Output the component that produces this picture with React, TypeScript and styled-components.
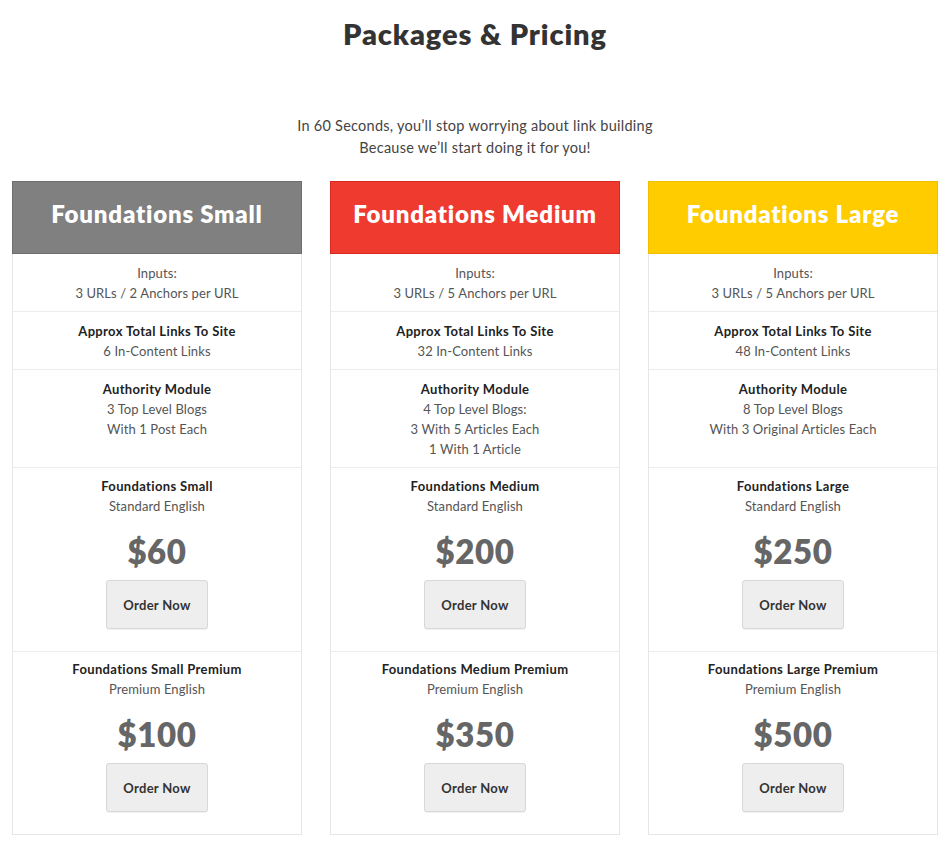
import React from "react";
import styled, { createGlobalStyle } from "styled-components";

const Global = createGlobalStyle`
  html, body { margin: 0; padding: 0; background: #fff; }
  body { font-family: Lato, "Open Sans", Arial, sans-serif; color: #444; }
`;

const Page = styled.div`
  padding: 0 12px 22px;
`;

const Title = styled.h1`
  margin: 0;
  padding-top: 14px;
  height: 40px;
  line-height: 40px;
  font-size: 29px;
  font-weight: 800;
  color: #333;
  text-align: center;
  letter-spacing: 0.9px;
`;

const Intro = styled.p`
  margin: 61px 0 0;
  font-size: 14.5px;
  line-height: 22px;
  color: #444;
  text-align: center;
  letter-spacing: 0.25px;
`;

const Grid = styled.div`
  margin-top: 22px;
  display: grid;
  grid-template-columns: repeat(3, 1fr);
  grid-template-rows: 73px auto auto auto auto auto;
  column-gap: 28px;
`;

const Card = styled.div`
  display: grid;
  grid-template-rows: subgrid;
  grid-row: span 6;
  border: 1px solid #e6e6e6;
`;

const Header = styled.div<{ $bg: string; $edge: string }>`
  background: ${(p) => p.$bg};
  border: 1px solid ${(p) => p.$edge};
  margin: -1px -1px 0;
  padding-bottom: 9px;
  display: flex;
  align-items: center;
  justify-content: center;
  color: #fff;
  font-size: 24px;
  font-weight: 800;
  letter-spacing: 0.8px;
`;

const Cell = styled.div<{ $pt?: number; $pb?: number }>`
  border-top: 1px solid #ececec;
  padding: ${(p) => p.$pt ?? 9}px 8px ${(p) => p.$pb ?? 8}px;
  text-align: center;
  font-size: 13px;
  line-height: 20px;
  color: #555;
  letter-spacing: 0.1px;
  &:nth-child(2) { border-top: none; }
`;

const Label = styled.div`
  font-weight: 700;
  color: #222;
  letter-spacing: 0.35px;
`;

const Line = styled.div``;

const Price = styled.div`
  margin-top: 16px;
  font-size: 33px;
  line-height: 38px;
  font-weight: 800;
  color: #666;
  letter-spacing: 0.6px;
`;

const OrderButton = styled.button`
  margin-top: 10px;
  width: 102px;
  height: 49px;
  border: 1px solid #d8d8d8;
  border-radius: 3px;
  background: #eeeeee;
  box-shadow: 0 1px 1px rgba(0, 0, 0, 0.06);
  font-family: inherit;
  font-size: 13px;
  font-weight: 700;
  color: #333;
  letter-spacing: 0.3px;
  cursor: pointer;
`;

type Tier = {
  name: string;
  bg: string;
  edge: string;
  inputs: string;
  links: string;
  authority: string[];
  std: string;
  prem: string;
};

const tiers: Tier[] = [
  {
    name: "Foundations Small",
    bg: "#808080",
    edge: "#6e6e6e",
    inputs: "3 URLs / 2 Anchors per URL",
    links: "6 In-Content Links",
    authority: ["3 Top Level Blogs", "With 1 Post Each"],
    std: "$60",
    prem: "$100",
  },
  {
    name: "Foundations Medium",
    bg: "#ef3a2f",
    edge: "#d6281e",
    inputs: "3 URLs / 5 Anchors per URL",
    links: "32 In-Content Links",
    authority: ["4 Top Level Blogs:", "3 With 5 Articles Each", "1 With 1 Article"],
    std: "$200",
    prem: "$350",
  },
  {
    name: "Foundations Large",
    bg: "#ffcc00",
    edge: "#efbf00",
    inputs: "3 URLs / 5 Anchors per URL",
    links: "48 In-Content Links",
    authority: ["8 Top Level Blogs", "With 3 Original Articles Each"],
    std: "$250",
    prem: "$500",
  },
];

export default function App() {
  return (
    <>
      <Global />
      <Page>
        <Title>Packages &amp; Pricing</Title>
        <Intro>
          In 60 Seconds, you’ll stop worrying about link building
          <br />
          Because we’ll start doing it for you!
        </Intro>
        <Grid>
          {tiers.map((t) => (
            <Card key={t.name}>
              <Header $bg={t.bg} $edge={t.edge}>{t.name}</Header>
              <Cell>
                <Line>Inputs:</Line>
                <Line>{t.inputs}</Line>
              </Cell>
              <Cell>
                <Label>Approx Total Links To Site</Label>
                <Line>{t.links}</Line>
              </Cell>
              <Cell>
                <Label>Authority Module</Label>
                {t.authority.map((a) => (
                  <Line key={a}>{a}</Line>
                ))}
              </Cell>
              <Cell $pt={8} $pb={22}>
                <Label>{t.name}</Label>
                <Line>Standard English</Line>
                <Price>{t.std}</Price>
                <OrderButton>Order Now</OrderButton>
              </Cell>
              <Cell $pt={7} $pb={22}>
                <Label>{t.name} Premium</Label>
                <Line>Premium English</Line>
                <Price>{t.prem}</Price>
                <OrderButton>Order Now</OrderButton>
              </Cell>
            </Card>
          ))}
        </Grid>
      </Page>
    </>
  );
}
